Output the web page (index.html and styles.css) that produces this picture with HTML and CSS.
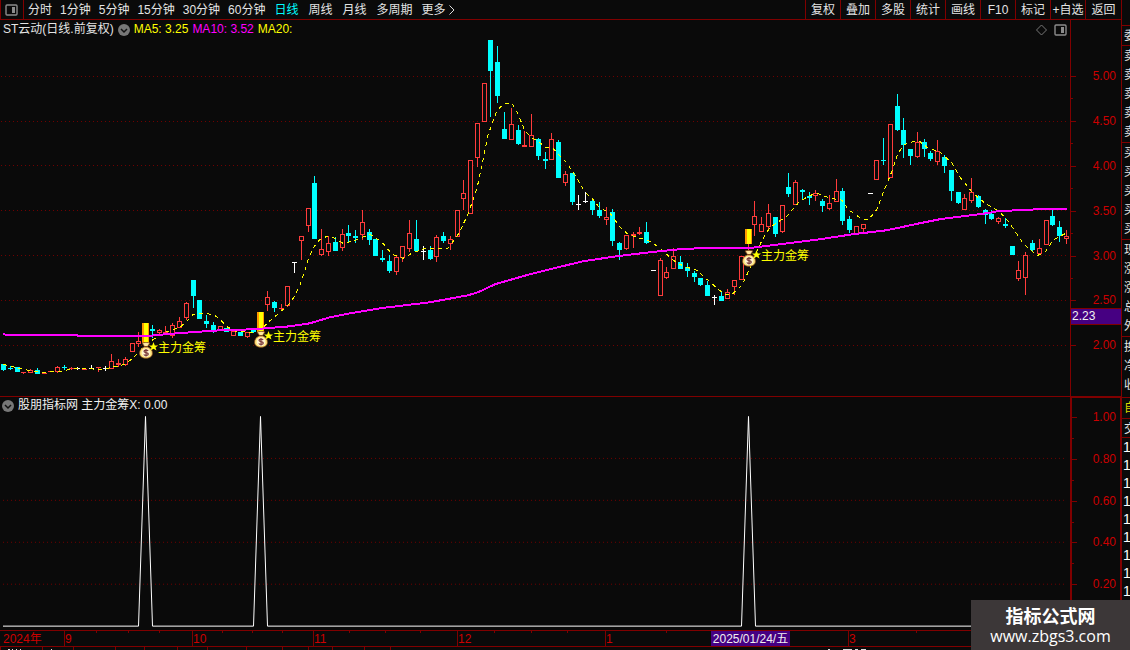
FILE: index.html
```html
<!DOCTYPE html>
<html lang="zh-CN">
<head>
<meta charset="utf-8">
<title>ST云动 日线</title>
<link rel="stylesheet" href="styles.css">
</head>
<body>
<div class="app">
  <main class="main">
    <header class="toolbar">
      <button class="layout-btn" aria-label="布局">
        <svg width="13" height="12" viewBox="0 0 13 12"><rect x="1" y="1" width="11" height="10" rx="1" fill="none" stroke="#8c8c8c" stroke-width="1.4"/><rect x="7" y="3" width="3" height="6" fill="#8c8c8c"/></svg>
      </button>
      <nav class="periods">
        <button>分时</button><button>1分钟</button><button>5分钟</button><button>15分钟</button><button>30分钟</button><button>60分钟</button><button class="word active">日线</button><button class="word">周线</button><button class="word">月线</button><button class="word">多周期</button><button class="more">更多<svg width="6" height="10" viewBox="0 0 6 10"><path d="M.5 .5 5 5 .5 9.5" fill="none" stroke="#dcdcdc"/></svg></button>
      </nav>
      <div class="tools">
        <button>复权</button><button>叠加</button><button>多股</button><button>统计</button><button>画线</button><button>F10</button><button>标记</button><button>+自选</button><button>返回</button>
      </div>
    </header>

    <section class="pane price">
      <div class="plot">
        <svg class="canvas" id="price" viewBox="0 20 1070 376" preserveAspectRatio="none"></svg>
        <div class="legend">
          <span>ST云动(日线.前复权)</span>
          <svg class="fold" width="12" height="12" viewBox="0 0 12 12"><circle cx="6" cy="6" r="6" fill="#777"/><path d="M3 5 6 8 9 5" fill="none" stroke="#111" stroke-width="1.5"/></svg>
          <span class="ma5">MA5: 3.25</span>
          <span class="ma10">MA10: 3.52</span>
          <span class="ma5">MA20:</span>
          <svg class="corner" width="31" height="12" viewBox="0 0 31 12"><path d="M5.500 1 10.500 6 5.500 11 .5 6Z" fill="none" stroke="#777"/><rect x="19" y="1" width="11" height="10" rx="1" fill="none" stroke="#8c8c8c" stroke-width="1.400"/><rect x="25" y="3" width="3" height="6" fill="#8c8c8c"/></svg>
        </div>
        <div id="signals"></div>
      </div>
      <ul class="axis">
        <li>5.00</li><li class="minor"></li><li>4.50</li><li class="minor"></li><li>4.00</li><li class="minor"></li><li>3.50</li><li class="minor"></li><li>3.00</li><li class="minor"></li><li>2.50</li><li class="minor"></li><li>2.00</li>
      </ul>
      <output class="cursor-price">2.23</output>
    </section>

    <section class="pane indicator">
      <div class="plot">
        <svg class="canvas" viewBox="0 397 1070 233" preserveAspectRatio="none">
          <path class="grid" d="M3 458.500H1067M3 500.500H1067M3 542.500H1067M3 584.500H1067"/>
          <path class="spikes" d="M3 626.500H138.500L145.500 416.500 152.500 626.500H253.500L260.500 416.500 267.500 626.500H741.500L748.500 416.500 755.500 626.500H1067"/>
        </svg>
        <div class="legend">
          <svg class="fold" width="12" height="12" viewBox="0 0 12 12"><circle cx="6" cy="6" r="6" fill="#777"/><path d="M3 5 6 8 9 5" fill="none" stroke="#111" stroke-width="1.5"/></svg>
          <span>股朋指标网 主力金筹X: 0.00</span>
        </div>
      </div>
      <ul class="axis">
        <li>1.00</li><li class="minor"></li><li>0.80</li><li class="minor"></li><li>0.60</li><li class="minor"></li><li>0.40</li><li class="minor"></li><li>0.20</li>
      </ul>
    </section>

    <div class="dates">
      <span class="year">2024年</span><span class="m9">9</span><span class="m10">10</span><span class="m11">11</span><span class="m12">12</span><span class="m1">1</span><span class="m3">3</span>
      <output class="cursor-date">2025/01/24/五</output>
    </div>
    <div class="tabs">
      <svg width="900" height="3" viewBox="0 0 900 3"><path d="M.5 0v3M42.500 0v3M73.500 0v3M115.500 0v3M144.500 0v3M177.500 0v3M207.500 0v3M246.500 0v3M282.500 0v3M308.500 0v3M332.500 0v3M364.500 0v3M390.500 0v3" stroke="#800000"/><path d="M8 2.500h2M12 2.500h1M16 2.500h1M20 2.500h1M51 2.500h1M828 2.500h2M843 2.500h9M855 2.500h3M861 2.500h5" stroke="#ddd"/></svg>
    </div>
  </main>

  <aside class="quotes">
    <ul class="g head"><li>委</li></ul>
    <ul class="g"><li>卖</li><li>卖</li><li>卖</li><li>卖</li><li>卖</li></ul>
    <ul class="g"><li>买</li><li>买</li><li>买</li><li>买</li><li>买</li></ul>
    <ul class="g"><li>现</li><li>涨</li><li>涨</li><li>总</li><li>外</li></ul>
    <ul class="g last"><li>换</li><li>净</li><li>收</li></ul>
    <ul class="g own"><li>自</li></ul>
    <ul class="g deal"><li>交</li></ul>
    <ul class="ticks"><li>1</li><li>1</li><li>1</li><li>1</li><li>1</li><li>1</li><li>1</li><li>1</li><li>1</li></ul>
  </aside>

  <div class="brand">
    <strong>指标公式网</strong>
    <span>www.zbgs3.com</span>
  </div>
</div>
<script src="chart.js"></script>
</body>
</html>
```

FILE: styles.css
```css
* { box-sizing: border-box; }
body {
  margin: 0;
  background: #0a0a0a;
  color: #e4e4e4;
  font: 12px/15px "Liberation Sans", "Noto Sans CJK SC", sans-serif;
}
ul { list-style: none; margin: 0; padding: 0; }
button {
  font: inherit;
  color: inherit;
  background: none;
  border: 0;
  padding: 0;
  white-space: nowrap;
}
.app {
  position: relative;
  display: flex;
  height: 100vh;
  min-height: 400px;
  overflow: hidden;
}
.main { flex: 1; min-width: 0; display: flex; flex-direction: column; }

.toolbar {
  display: flex;
  flex: none;
  height: 20px;
  border-bottom: 1px solid #800000;
}
.layout-btn {
  display: flex;
  align-items: center;
  justify-content: center;
  width: 24px;
  padding-right: 2px;
  border-left: 1px solid #800000;
  border-right: 1px solid #800000;
}
.periods { display: flex; flex: 1; overflow: hidden; }
.periods button { padding: 1px 4px 0; }
.periods .word { padding: 1px 5px 0; }
.periods .active { color: #00ffff; }
.periods .more { display: flex; align-items: center; gap: 3px; }
.tools { display: flex; }
.tools button { width: 35px; padding-top: 1px; border-left: 1px solid #800000; }
.tools button:last-child { width: 36px; }

.pane { position: relative; display: flex; min-height: 0; }
.price { flex: 377 1 0; border-bottom: 1px solid #800000; }
.indicator { flex: 233 1 0; }
.plot { position: relative; flex: 1; min-width: 0; }
.canvas {
  position: absolute;
  width: 100%;
  height: 100%;
  shape-rendering: crispEdges;
}
.legend {
  position: absolute;
  top: 2px;
  left: 0;
  right: 0;
  display: flex;
  align-items: center;
  gap: 4px;
  padding: 0 3px;
  white-space: nowrap;
}
.indicator .legend { top: 1px; padding-left: 2px; color: #f0f0f0; }
.corner { margin-left: auto; }
.ma5 { color: #ffff00; }
.ma10 { color: #ff00ff; }

.grid { fill: none; stroke: #700000; stroke-dasharray: 1 3; }
.spikes { fill: none; stroke: #fff; }
.up { stroke: #ff3c3c; fill: #0a0a0a; }
.down { stroke: #00ffff; fill: #00ffff; }
.flat { stroke: #fff; fill: #fff; }
.solid { fill: #ff3c3c; }
.gold-edge { fill: #ff9900; }
.gold-core { fill: #ffff00; }
.line5 { fill: none; stroke: #ffff00; stroke-dasharray: 4 4; }
.line10 { fill: none; stroke: #ff00ff; stroke-width: 2; }

.signal {
  position: absolute;
  display: flex;
  line-height: 13px;
  color: #ffff00;
  white-space: nowrap;
}

.axis {
  display: flex;
  flex: none;
  flex-direction: column;
  justify-content: space-between;
  width: 51px;
  padding: 49px 5px 43px 0;
  border-left: 1px solid #800000;
  color: #cc0000;
}
.indicator .axis {
  padding: 12px 4px 38px 0;
  border: solid #800000;
  border-width: 1px 1px 0 2px;
}
.axis li {
  display: flex;
  align-items: center;
  justify-content: space-between;
  height: 15px;
}
.axis li::before { content: ""; width: 5px; height: 1px; background: #800000; }
.axis .minor::before { width: 2px; }
.cursor-price {
  position: absolute;
  right: 0;
  top: 288px;
  width: 50px;
  height: 17px;
  padding-left: 1px;
  background: #460082;
  border: solid #800000;
  border-width: 1px 0;
  color: #f0f0f0;
}

.dates {
  position: relative;
  display: flex;
  flex: none;
  height: 17px;
  border: solid #800000;
  border-width: 1px 0;
  color: #cc0000;
  line-height: 16px;
}
.dates > span {
  min-width: 0;
  text-indent: 1px;
  background:
    linear-gradient(#800000, #800000) 0 0 / 1px 100% no-repeat,
    linear-gradient(#800000, #800000) 25% 0 / 1px 2px no-repeat,
    linear-gradient(#800000, #800000) 50% 0 / 1px 2px no-repeat,
    linear-gradient(#800000, #800000) 75% 0 / 1px 2px no-repeat;
}
.dates > .year { flex: 64 1 0; text-indent: 3px; background: none; }
.dates > .m9 { flex: 128 1 0; }
.dates > .m10 { flex: 121 1 0; }
.dates > .m11 { flex: 144 1 0; }
.dates > .m12 { flex: 148 1 0; }
.dates > .m1 { flex: 243 1 0; }
.dates > .m3 { flex: 273 1 0; }
.cursor-date {
  position: absolute;
  left: 711px;
  top: 0;
  width: 79px;
  height: 15px;
  text-align: center;
  white-space: nowrap;
  background: #460082;
  color: #f0f0f0;
}
.tabs { flex: none; height: 3px; overflow: hidden; }
.tabs svg { display: block; }

.quotes {
  flex: none;
  width: 9px;
  padding-top: 25px;
  overflow: hidden;
  border-left: 1px solid #800000;
}
.quotes li { padding-left: 2px; height: 19px; line-height: 21px; }
.g { border-top: 1px solid #800000; }
.g:not(.head):not(.own):not(.deal) { padding-bottom: 1px; }
.last { height: 61px; }
.own { height: 21px; color: #d8d800; }
.deal { height: 20px; border-bottom: 1px solid #800000; }
.ticks { font-size: 14px; color: #fff; }
.quotes .ticks li { height: 18px; line-height: 19px; padding-left: 1px; }

.brand {
  position: absolute;
  right: 0;
  bottom: 0;
  display: flex;
  flex-direction: column;
  align-items: center;
  width: 159px;
  height: 50px;
  padding-top: 4px;
  background: #3c3738;
  color: #fff;
}
.brand strong { font: bold 18px/22px "Noto Sans CJK SC", sans-serif; }
.brand span { font: 16px/20px "Open Sans", sans-serif; }
```

FILE: chart.js
```js
// Candles in order: [kind, high, bodyTop, bodyBottom, low]
// u = hollow rising, s = solid rising, d = falling, f = flat, g = gold signal bar
const candles = `
d 364 364 370 371|d 366 368 369 370|d 367 367 372 372|s 372 372 373 374|u 369 370 373 373|d 368 370 374 374|s 373 373 374 374|s 371 371 372 372
u 366 367 372 373|d 365 367 368 370|s 367 368 369 370|f 367 368 369 370|s 369 369 370 370|f 365 368 369 369|s 367 367 368 372|f 366 368 369 371
u 354 361 369 369|s 359 363 365 367|u 357 359 365 366|u 343 343 352 352|u 332 341 344 347|g 323 323 343 346|d 325 329 331 338|u 329 330 333 336
s 326 332 333 335|u 323 325 336 338|u 317 321 328 328|u 302 303 318 320|d 280 280 296 308|d 300 300 319 319|d 315 321 324 328|d 322 325 331 333
u 326 326 330 330|d 328 328 332 332|u 331 331 336 336|d 332 332 336 336|u 332 332 337 338|d 330 330 332 333|g 312 312 332 335|u 291 297 305 311
d 301 302 308 312|s 304 308 309 311|u 286 286 306 307|f 262 262 263 273|u 236 236 241 260|u 208 208 226 232|d 176 183 239 239|u 229 249 255 256
u 236 243 252 256|d 237 242 251 251|u 229 234 248 251|d 225 233 236 242|d 230 236 238 243|u 210 222 235 240|d 229 232 240 245|d 239 239 256 256
d 250 258 260 262|d 255 261 271 273|u 256 257 272 275|u 246 246 258 262|u 220 233 249 252|d 220 239 251 251|f 246 251 252 260|d 246 250 259 260
u 235 237 257 262|d 232 236 241 243|u 236 239 244 250|u 210 210 237 237|u 180 193 199 210|u 160 160 214 214|u 123 123 158 167|u 83 83 122 122
d 40 40 71 117|d 46 62 96 103|d 112 129 139 139|u 108 124 140 140|d 125 130 144 145|s 131 145 147 147|u 114 135 147 147|d 138 139 156 160
d 152 159 161 169|u 133 139 160 160|d 140 142 178 178|u 171 174 183 186|d 173 173 202 205|f 195 204 205 210|f 192 201 202 203|d 200 201 210 215
d 202 210 216 218|u 207 217 220 225|d 209 212 241 246|d 242 243 250 260|u 235 235 249 250|s 232 234 236 248|s 227 232 234 235|d 222 232 243 244
f 270 270 271 271|u 258 260 296 296|u 267 272 278 279|u 248 256 269 269|d 256 262 269 269|d 263 267 271 277|d 271 273 277 282|d 278 278 285 286
d 281 285 296 296|f 295 297 298 305|d 292 296 301 301|u 289 292 299 299|u 280 280 287 295|u 256 256 280 280|g 229 229 244 250|u 201 216 225 236
u 217 224 232 232|u 204 213 227 230|d 217 217 234 237|u 205 205 232 233|d 173 187 194 197|u 180 182 205 205|d 189 190 192 200|d 192 196 198 205
u 190 193 196 201|d 199 201 206 212|u 195 203 209 210|u 179 191 202 202|d 188 191 221 225|d 216 219 230 233|u 226 226 234 234|u 224 224 229 233
f 193 193 194 194|u 160 160 180 180|d 138 160 161 165|u 124 124 178 178|d 94 106 130 131|d 118 130 145 158|d 149 149 156 165|u 132 142 157 158
d 139 142 149 157|d 151 153 159 161|u 140 151 162 165|d 155 157 166 173|d 170 170 191 201|d 192 192 203 204|u 194 198 210 210|u 178 192 201 203
d 195 196 207 208|d 209 210 215 224|d 210 214 219 220|u 217 218 222 224|d 218 224 226 228|d 246 246 255 255|u 261 270 279 281|u 252 255 278 295
d 240 243 250 252|u 239 248 254 254|u 220 220 245 245|d 210 216 225 226|d 221 227 236 242|u 230 236 239 244`
  .trim().split(/[|\n]/).map(r => r.split(' '));

const ma5 = '3,364 12,366 23,369 43,372 60,371 75,368 103,369 125,364 135,356 145,345 155,338 165,332 180,327 187,321 193,314 200,313 213,314 220,319 228,327 236,331 250,332 260,331 268,322 280,312 288,305 294,297 300,285 303,276 308,260 313,248 319,240 327,236 333,237 343,243 353,241 370,234 382,242 392,254 403,258 412,253 425,248 448,248 459,233 468,214 477,188 483,160 488,135 497,110 505,103 512,103 518,114 525,131 532,138 538,141 545,147 552,147 560,156 567,163 575,175 585,192 592,198 600,208 610,213 620,227 628,234 640,238 650,241 660,248 670,257 677,263 687,267 697,270 708,280 717,288 725,294 732,294 742,285 749,270 753,260 762,240 770,227 787,216 798,203 808,196 817,193 830,198 842,200 848,209 862,219 869,219 877,209 883,193 892,171 897,156 903,145 912,142 918,140 928,148 940,152 952,163 960,177 973,193 985,203 997,210 1005,217 1013,228 1023,243 1032,251 1038,255 1045,252 1053,240 1060,236 1066,233';
const ma10 = '3,334 12,335 77,335 80,336 145,336 165,334 190,332 220,330 253,329 290,326 310,323 330,317 350,313 380,308 430,302 468,295 478,292 495,284 530,274 550,269 583,261 617,256 650,252 680,249 700,248 748,248 780,244 820,239 853,234 887,230 920,223 940,219 987,213 998,211 1040,209 1067,209';

let out = `<path class="grid" d="${[76, 121, 165, 210, 255, 300, 345].map(y => `M1 ${y + 0.5}H1067`).join('')}"/>`;
candles.forEach(([kind, ...v], i) => {
  const x = Math.round(3 + 6.77 * i);
  const [high, top, bottom, low] = v.map(Number);
  if (kind === 'g') {
    out += `<path class="up" d="M${x + 0.5} ${bottom}V${low}"/>`
      + `<path class="gold-edge" d="M${x - 3} ${top}h7V${bottom}h-7Z"/>`
      + `<path class="gold-core" d="M${x - 1} ${top}h4V${bottom}h-4Z"/>`;
    return;
  }
  const cls = { u: 'up', s: 'up solid', d: 'down', f: 'flat' }[kind];
  out += `<path class="${cls}" d="M${x + 0.5} ${high}V${Math.max(low, bottom)}"/>`;
  out += kind === 'u'
    ? `<rect class="up" x="${x - 1.5}" y="${top + 0.5}" width="4" height="${bottom - top - 1}"/>`
    : `<path class="${cls}" style="stroke:none" d="M${x - 2} ${top}h5V${bottom}h-5Z"/>`;
});
out += `<polyline class="line5" points="${ma5}"/><polyline class="line10" points="${ma10}"/>`;
document.getElementById('price').innerHTML = out;

const bag = `<svg width="19" height="17" viewBox="0 0 19 17">
<path d="M3 1Q7 -.5 11 1L8.500 4.500H5.500Z" fill="#ffe9a0" stroke="#7a3b12" stroke-width=".8"/>
<path d="M5 5C2 6.500 .6 8.500 .6 11.200c0 3.500 3 5 6.400 5s6.400-1.500 6.400-5C13.400 8.500 12 6.500 9 5Z" fill="#ffe680" stroke="#8a4a18" stroke-width=".8"/>
<circle cx="7" cy="10.700" r="4.300" fill="#fff3d0"/>
<path d="M9.200 8.800C8.500 7.900 5 7.600 5 9.300s4.300 1 4.300 2.800-3.700 1.600-4.500.4M7 7v7.500" fill="none" stroke="#7a3838" stroke-width="1.200"/>
<path d="M14.500 0 15.800 3.400H19L16.500 5.400 17.500 8.500 14.500 6.700 11.500 8.500 12.500 5.400 10 3.400H13.200Z" fill="#ff0"/></svg>`;
document.getElementById('signals').innerHTML = [[139, 342], [254, 331], [742, 250]].map(([x, y]) =>
  `<div class="signal" style="left:${x / 10.7}%;top:${(y - 20) / 3.76}%">${bag}<span>主力金筹</span></div>`).join('');
```
